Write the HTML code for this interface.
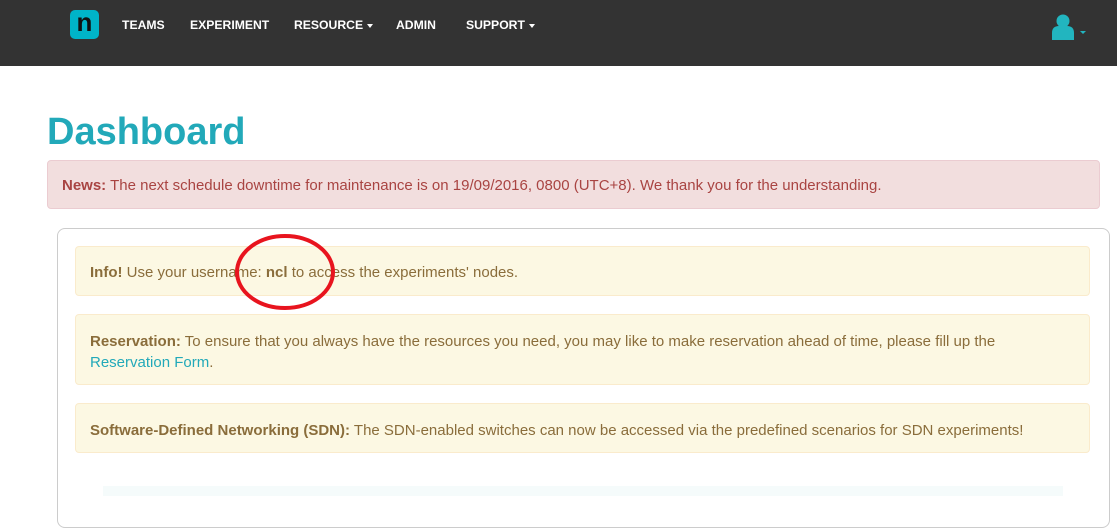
<!DOCTYPE html>
<html><head><style>
*{box-sizing:border-box;margin:0;padding:0}
body{width:1117px;height:494px;overflow:hidden;background:#fff;font-family:"Liberation Sans",sans-serif;position:relative}
.nav{position:absolute;left:0;top:0;width:1117px;height:66px;background:#333}
.logo{position:absolute;left:70px;top:10px;width:29px;height:29px;background:#00b4c8;border-radius:5px;color:#111;font-weight:bold;font-size:26px;text-align:center;line-height:25px}
.nl{position:absolute;top:18px;color:#fff;font-weight:bold;font-size:12.2px}
.car{display:inline-block;border-left:3.5px solid transparent;border-right:3.5px solid transparent;border-top:4px solid #fff;vertical-align:middle;margin-left:4px}
h1{position:absolute;left:47px;top:111px;font-size:38px;color:#22a9b9;font-weight:bold}
.news{position:absolute;left:47px;top:160px;width:1053px;height:49px;background:#f2dede;border:1px solid #ebccd1;border-radius:4px;color:#a94442;font-size:15px;padding:16px 14px}
.panel{position:absolute;left:57px;top:228px;width:1053px;height:300px;border:1px solid #ccc;border-radius:8px}
.al{position:absolute;left:75px;width:1015px;background:#fcf8e3;border:1px solid #faebcc;border-radius:4px;color:#8a6d3b;font-size:15px;padding:16px 14px;line-height:21px}
a{color:#22a9b9;text-decoration:none}
</style></head><body>
<div class="nav">
<div class="logo">n</div>
<div class="nl" style="left:122px">TEAMS</div>
<div class="nl" style="left:190px">EXPERIMENT</div>
<div class="nl" style="left:294px">RESOURCE<span class="car"></span></div>
<div class="nl" style="left:396px">ADMIN</div>
<div class="nl" style="left:466px">SUPPORT<span class="car"></span></div>
<svg style="position:absolute;left:1050px;top:14px" width="40" height="28"><circle cx="13" cy="7" r="6.5" fill="#22b5bf"/><path d="M2 26 V19 Q2 12 9 12 H17 Q24 12 24 19 V26 Z" fill="#22b5bf"/><path d="M30 17 h6 l-3 3z" fill="#22b5bf"/></svg>
</div>
<h1>Dashboard</h1>
<div class="news"><b>News:</b> The next schedule downtime for maintenance is on 19/09/2016, 0800 (UTC+8). We thank you for the understanding.</div>
<div class="panel"></div>
<div class="al" style="top:246px;height:50px;padding-top:15px"><b>Info!</b> Use your username: <b>ncl</b> to access the experiments' nodes.</div>
<div class="al" style="top:314px;height:71px;padding-top:16px"><b>Reservation:</b> To ensure that you always have the resources you need, you may like to make reservation ahead of time, please fill up the<br><a>Reservation Form</a>.</div>
<div class="al" style="top:403px;height:50px;padding-top:16px"><b>Software-Defined Networking (SDN):</b> The SDN-enabled switches can now be accessed via the predefined scenarios for SDN experiments!</div>
<div style="position:absolute;left:103px;top:486px;width:960px;height:10px;background:#f5fbfb"></div>
<svg style="position:absolute;left:230px;top:232px" width="110" height="82"><ellipse cx="55" cy="40" rx="48" ry="36" fill="none" stroke="#e8141e" stroke-width="4"/></svg>
</body></html>
